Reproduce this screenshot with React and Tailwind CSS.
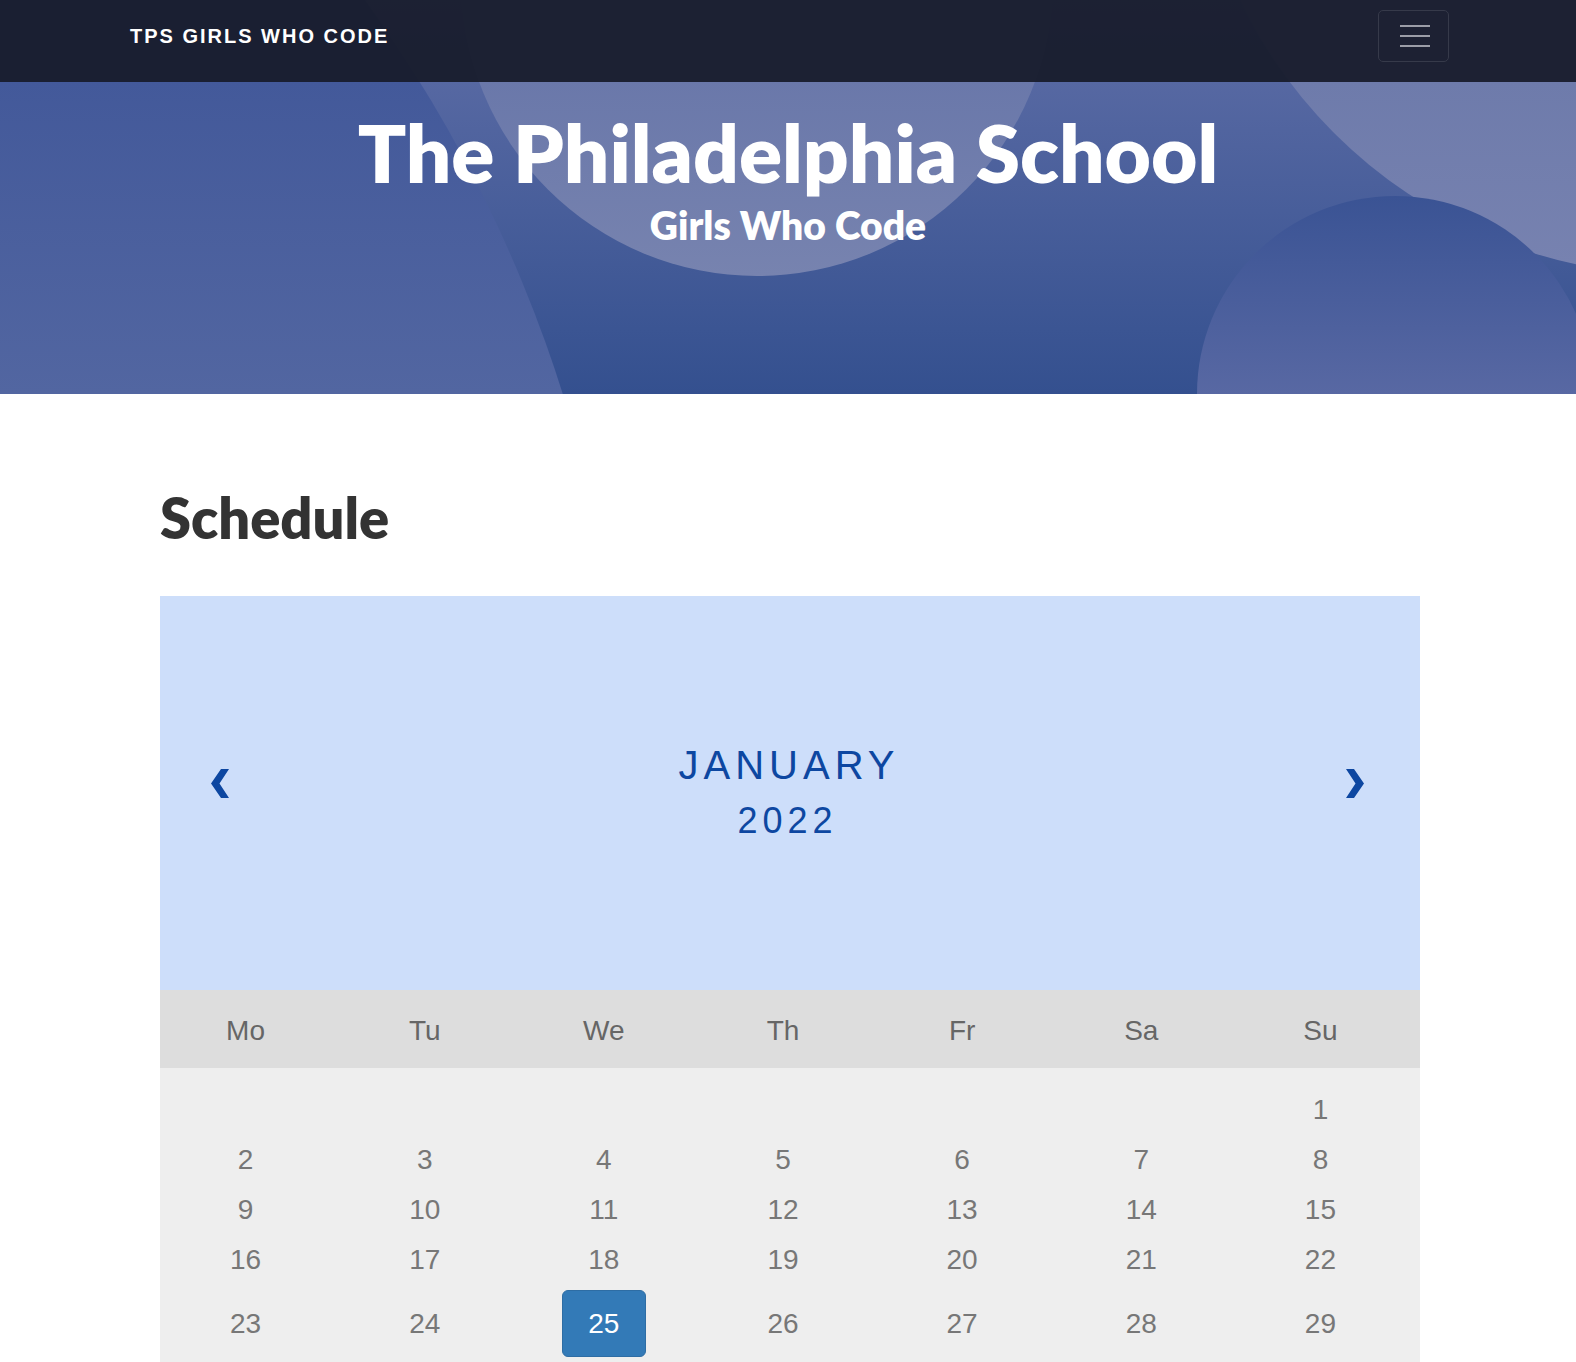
const days = ["Mo", "Tu", "We", "Th", "Fr", "Sa", "Su"];

const weeks = [
    [null, null, null, null, null, null, 1],
    [2, 3, 4, 5, 6, 7, 8],
    [9, 10, 11, 12, 13, 14, 15],
    [16, 17, 18, 19, 20, 21, 22],
    [23, 24, 25, 26, 27, 28, 29],
];

const today = 25;

function Chevron({ flip }) {
    return (
        <svg width="18" height="29" viewBox="0 0 18 29" className={flip ? "rotate-180" : ""}>
            <polygon points="10,0 18,0 8.5,14.5 18,29 10,29 0,14.5" fill="#0d47a1" />
        </svg>
    );
}

function Header() {
    return (
        <header className="relative h-[394px] overflow-hidden bg-[linear-gradient(to_bottom,#5f6ea7,#34508f)]">
            {/* background shapes */}
            <div className="absolute left-[-2122px] top-[-568px] w-[2748px] h-[2748px] rounded-full bg-[linear-gradient(to_bottom,#43599a_23.6%,#5266a1_35%)]" />
            <div className="absolute left-[461px] top-[-316px] w-[592px] h-[592px] rounded-full bg-[linear-gradient(to_bottom,#6a78aa_67%,#7783af_100%)]" />
            <div className="absolute left-[1192px] top-[-695px] w-[970px] h-[970px] rounded-full bg-[linear-gradient(to_bottom,#6e7bab_80%,#7782b0_99%)]" />
            <div className="absolute left-[1197px] top-[196px] w-[396px] h-[396px] rounded-full bg-[linear-gradient(to_bottom,#3a5394_0%,#5868a3_50%)]" />

            <nav className="relative z-10 h-[82px] bg-[#181c2c]/95 flex items-center justify-between pl-[130px] pr-[127px] pb-[10px]">
                <a className="text-white font-bold text-[20px] tracking-[2px] font-['Liberation_Sans',Arial,sans-serif]">
                    TPS GIRLS WHO CODE
                </a>
                <button className="w-[71px] h-[52px] border border-[#363a4a] rounded-[5px] flex flex-col items-center justify-center gap-[8px] pl-[3px]">
                    <span className="block w-[30px] h-[2px] bg-[#9b9da7]" />
                    <span className="block w-[30px] h-[2px] bg-[#9b9da7]" />
                    <span className="block w-[30px] h-[2px] bg-[#9b9da7]" />
                </button>
            </nav>

            <div className="relative z-10 text-center text-white font-['Lato',sans-serif]">
                <h1 className="mt-[30px] text-[80px] leading-none font-extrabold">The Philadelphia School</h1>
                <h2 className="mt-[14px] text-[39px] leading-none font-extrabold">Girls Who Code</h2>
            </div>
        </header>
    );
}

function Calendar() {
    return (
        <div className="w-[1260px] font-['Liberation_Sans',Arial,sans-serif]">
            <div className="h-[394px] bg-[#cddefa] flex items-center">
                <div className="flex-1 pl-[51px]">
                    <button className="block mb-[19px]">
                        <Chevron />
                    </button>
                </div>
                <div className="flex flex-col items-center gap-[18px] pb-[2px] text-[#0d47a1]">
                    <div className="text-[40px] leading-none tracking-[5px] pl-[3px]">JANUARY</div>
                    <div className="text-[36px] leading-none tracking-[5px]">2022</div>
                </div>
                <div className="flex-1 flex justify-end pr-[56px]">
                    <button className="block mb-[19px]">
                        <Chevron flip />
                    </button>
                </div>
            </div>

            <div className="bg-[#dddddd] h-[78px] pt-[3px]">
                <div className="grid grid-cols-7 w-[1254px] -ml-[4px] h-full items-center">
                    {days.map((d) => (
                        <div key={d} className="text-center text-[28px] leading-none text-[#666]">
                            {d}
                        </div>
                    ))}
                </div>
            </div>

            <div className="bg-[#eeeeee] pt-[17px] pb-[8px]">
                {weeks.map((week, i) => (
                    <div key={i} className="grid grid-cols-7 w-[1254px] -ml-[4px]">
                        {week.map((n, j) => (
                            <div
                                key={j}
                                className={`flex items-center justify-center text-[28px] text-[#777] ${
                                    i === weeks.length - 1 ? "h-[77px]" : "h-[50px]"
                                }`}
                            >
                                {n === today ? (
                                    <span className="w-[84px] h-[67px] flex items-center justify-center rounded-[6px] bg-[#337ab7] border border-[#2e6da4] text-white">
                                        {n}
                                    </span>
                                ) : (
                                    n
                                )}
                            </div>
                        ))}
                    </div>
                ))}
            </div>
        </div>
    );
}

export default function App() {
    return (
        <div className="min-h-screen bg-white">
            <Header />
            <main className="pl-[160px]">
                <h2 className="mt-[96px] text-[56px] leading-none font-extrabold text-[#333] font-['Lato',sans-serif]">
                    Schedule
                </h2>
                <div className="mt-[50px]">
                    <Calendar />
                </div>
            </main>
        </div>
    );
}
